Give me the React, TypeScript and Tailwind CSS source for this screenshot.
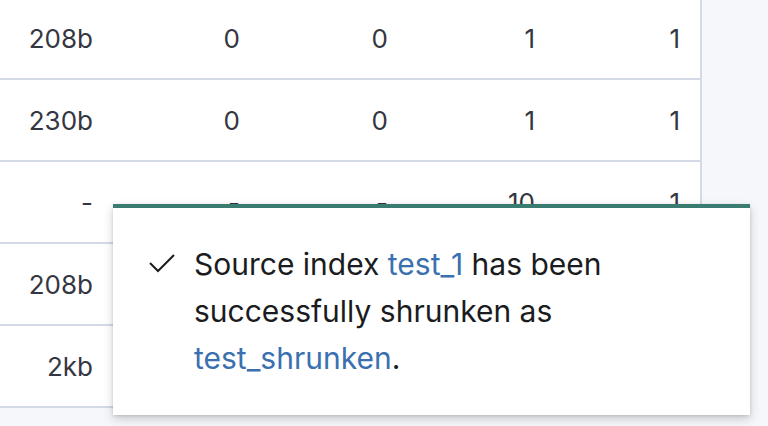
import React from 'react';

const rows: string[][] = [
  ['208b', '0', '0', '1', '1'],
  ['230b', '0', '0', '1', '1'],
  ['-', '-', '-', '10', '1'],
  ['208b', '', '', '', ''],
  ['2kb', '', '', '', ''],
];

export default function App() {
  return (
    <div
      className="relative h-[426px] w-[768px] overflow-hidden bg-[#f5f7fa] text-[#343741]"
      style={{ fontFamily: 'Inter, "Noto Sans", sans-serif' }}
    >
      {/* Table */}
      <div className="-mt-[2px] w-[702px] border-r-2 border-[#d3dae6] bg-white">
        {rows.map((r, i) => (
          <div
            key={i}
            className="grid h-[82px] grid-cols-[93px_147px_148px_147px_145px] items-center border-b-2 border-[#d3dae6] text-[26px]"
          >
            {r.map((c, j) => (
              <div key={j} className="text-right">
                {c}
              </div>
            ))}
          </div>
        ))}
      </div>

      {/* Toast */}
      <div className="absolute left-[113px] top-[204px] h-[211px] w-[637px] border-t-4 border-[#3a7c72] bg-white shadow-[0_4px_10px_rgba(0,0,0,0.18),0_1px_3px_rgba(0,0,0,0.12)]">
        <div className="flex pl-[36px] pr-6 pt-[33px]">
          <svg
            className="mt-[13px] h-[20px] w-[26px] shrink-0 text-[#1a1c21]"
            viewBox="0 0 26 20"
            fill="none"
            stroke="currentColor"
            strokeWidth="2"
          >
            <path d="M1 9l8 8L25 1" />
          </svg>
          <p className="ml-[19px] text-[30px] leading-[47px] text-[#1a1c21]">
            Source index <span className="text-[#3b70b0]">test_1</span> has been
            <br />
            successfully shrunken as
            <br />
            <span className="text-[#3b70b0]">test_shrunken</span>.
          </p>
        </div>
      </div>
    </div>
  );
}
